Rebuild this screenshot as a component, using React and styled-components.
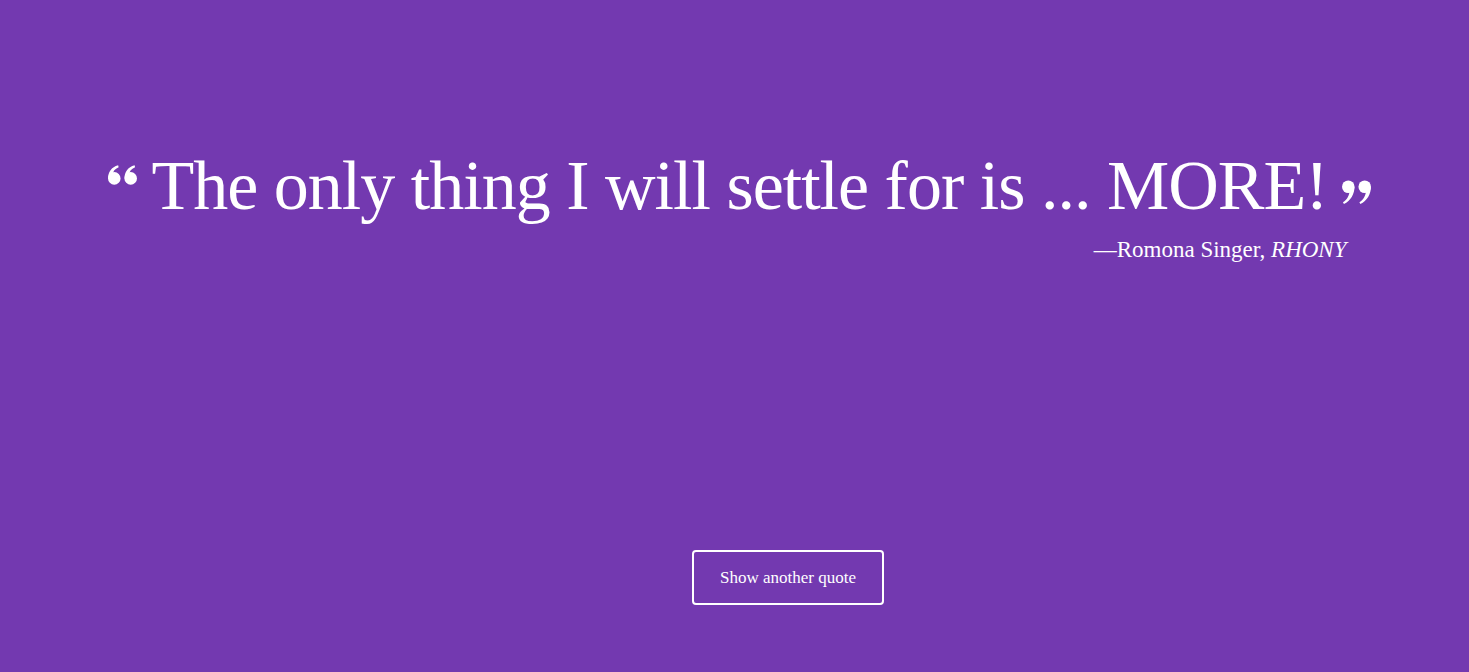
import React from "react";
import styled, { createGlobalStyle } from "styled-components";

const Global = createGlobalStyle`
  html, body { margin: 0; padding: 0; background: #7339b0; }
  body { font-family: "Liberation Serif", "DejaVu Serif", serif; color: #fff; }
`;

const Page = styled.main`
  height: 672px;
  display: flex;
  flex-direction: column;
  align-items: center;
  overflow: hidden;
`;

const QuoteBlock = styled.figure`
  margin: 0;
  padding-top: 141px;
  display: flex;
  flex-direction: column;
  align-items: stretch;
`;

const QuoteLine = styled.blockquote`
  margin: 0;
  display: flex;
  align-items: flex-start;
  gap: 15px;
  padding-left: 10px;
`;

const QuoteText = styled.span`
  font-size: 70px;
  letter-spacing: -1px;
  line-height: 90px;
  white-space: nowrap;
`;

const Mark = styled.svg`
  width: 29px;
  height: ${(p) => p.$h}px;
  flex: none;
  margin-top: ${(p) => p.$top}px;
  fill: #fff;
`;

const Attribution = styled.figcaption`
  align-self: flex-end;
  margin-right: 25px;
  font-size: 23px;
  line-height: 28px;
  margin-top: 5px;
  em { font-style: italic; }
`;

const ButtonRow = styled.div`
  margin-top: auto;
  margin-bottom: 67px;
  padding-left: 107px;
`;

const Button = styled.button`
  font-family: "Liberation Serif", "DejaVu Serif", serif;
  font-size: 17px;
  color: #fff;
  background: transparent;
  border: 2px solid #fff;
  border-radius: 4px;
  width: 192px;
  height: 55px;
  cursor: pointer;
`;

const LeftQuote = () => (
  <Mark $top={24} $h={20} viewBox="0 0 30 20" aria-hidden="true">
    <circle cx="6.5" cy="13.5" r="6.5" />
    <path d="M0.1 13.5 C0 7 3.5 2 10.5 0 L11 2 C7 3.6 5 6.5 5.2 9.5 Z" />
    <circle cx="23.5" cy="13.5" r="6.5" />
    <path d="M17.1 13.5 C17 7 20.5 2 27.5 0 L28 2 C24 3.6 22 6.5 22.2 9.5 Z" />
  </Mark>
);

const RightQuote = () => (
  <Mark $top={39} $h={25} viewBox="0 0 30 25" aria-hidden="true">
    <circle cx="6.5" cy="6.5" r="6.5" />
    <path d="M12.9 6.5 C13 14 9 21 2 24.5 L1 22.6 C5.5 20 7.5 15.5 7.8 11 Z" />
    <circle cx="23.5" cy="6.5" r="6.5" />
    <path d="M29.9 6.5 C30 14 26 21 19 24.5 L18 22.6 C22.5 20 24.5 15.5 24.8 11 Z" />
  </Mark>
);

export default function App() {
  return (
    <>
      <Global />
      <Page>
        <QuoteBlock>
          <QuoteLine>
            <LeftQuote />
            <QuoteText>The only thing I will settle for is ... MORE!</QuoteText>
            <RightQuote />
          </QuoteLine>
          <Attribution>
            —Romona Singer, <em>RHONY</em>
          </Attribution>
        </QuoteBlock>
        <ButtonRow>
          <Button>Show another quote</Button>
        </ButtonRow>
      </Page>
    </>
  );
}
